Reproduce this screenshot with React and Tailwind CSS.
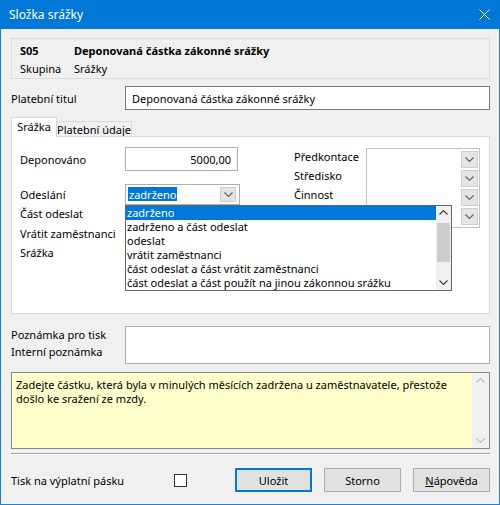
import React from "react";

const font = { fontFamily: '"Noto Sans", "Segoe UI", sans-serif' };

function Chevron({ up = false, color = "#606060" }) {
  return (
    <svg width="9" height="5" viewBox="0 0 9 5" className={up ? "rotate-180" : ""}>
      <path d="M0.5 0.5 L4.5 4.5 L8.5 0.5" fill="none" stroke={color} strokeWidth="1.1" />
    </svg>
  );
}

function ComboButton({ className = "" }) {
  return (
    <div className={`flex items-center justify-center bg-[#e5e5e5] border border-[#cfcfcf] ${className}`}>
      <Chevron />
    </div>
  );
}

const options = [
  "zadrženo",
  "zadrženo a část odeslat",
  "odeslat",
  "vrátit zaměstnanci",
  "část odeslat a část vrátit zaměstnanci",
  "část odeslat a část použít na jinou zákonnou srážku",
];

export default function App() {
  return (
    <div
      style={font}
      className="w-[500px] h-[505px] flex flex-col bg-[#f0f0f0] border border-t-0 border-[#1a82d6] text-[11px] text-black leading-none"
    >
      {/* Title bar */}
      <div className="h-[29px] -mx-px bg-[#0078d7] text-white flex items-center justify-between pl-[9px] pr-[10px]">
        <span className="text-[12px]">Složka srážky</span>
        <svg width="11" height="11" viewBox="0 0 11 11">
          <path d="M0.5 0.5 L10.5 10.5 M10.5 0.5 L0.5 10.5" stroke="white" strokeWidth="1" />
        </svg>
      </div>

      <div className="flex flex-col pl-[10px] pr-[9px]">
        {/* Header */}
        <div className="mt-[9px] h-[41px] border border-[#dcdcdc] px-[8px] pt-[2px] flex flex-col">
          <div className="h-[18px] flex items-center font-bold">
            <span className="w-[54px]">S05</span>
            <span>Deponovaná částka zákonné srážky</span>
          </div>
          <div className="h-[18px] flex items-center">
            <span className="w-[54px]">Skupina</span>
            <span>Srážky</span>
          </div>
        </div>

        {/* Platební titul */}
        <div className="mt-[7px] flex items-center">
          <span className="w-[114px]">Platební titul</span>
          <div className="flex-1 h-[24px] bg-white border border-[#7a7a7a] flex items-center px-[6px]">
            Deponovaná částka zákonné srážky
          </div>
        </div>

        {/* Tabs */}
        <div className="mt-[7px] flex items-end h-[19px]">
          <div className="h-[20px] w-[46px] bg-white border border-b-0 border-[#d9d9d9] flex items-center justify-center relative z-10 -mb-px pb-[2px]">
            Srážka
          </div>
          <div className="h-[15px] w-[75px] border border-l-0 border-b-0 border-[#d9d9d9] bg-[#f0f0f0] flex items-center justify-center">
            Platební údaje
          </div>
        </div>

        {/* Tab panel */}
        <div className="h-[178px] bg-white border border-[#d9d9d9] relative">
          <div className="flex pt-[10px] pl-[8px]">
            {/* Left column */}
            <div className="flex flex-col w-[274px]">
              <div className="flex items-center h-[24px]">
                <span className="w-[105px]">Deponováno</span>
                <div className="w-[113px] h-[24px] border border-[#adadad] flex items-center justify-end px-[6px]">
                  5000,00
                </div>
              </div>
              <div className="flex items-center h-[20px] mt-[13px]">
                <span className="w-[105px]">Odeslání</span>
                <div className="relative w-[115px] h-[21px] border border-[#adadad] flex items-center pl-[2px]">
                  <span className="bg-[#0078d7] text-white h-[14px] flex items-center px-px">zadrženo</span>
                  <ComboButton className="absolute right-[3px] top-[2px] w-[16px] h-[15px]" />
                  {/* Dropped list */}
                  <div className="absolute left-[-1px] top-[20px] w-[327px] bg-white border border-[#646464] z-20 flex">
                    <div className="flex-1 flex flex-col">
                      {options.map((o, i) => (
                        <div
                          key={o}
                          className={`h-[14px] flex items-center px-[1px] whitespace-nowrap ${
                            i === 0 ? "bg-[#0078d7] text-white" : ""
                          }`}
                        >
                          {o}
                        </div>
                      ))}
                    </div>
                    <div className="w-[15px] bg-[#f0f0f0] flex flex-col items-center">
                      <div className="h-[14px] flex items-center">
                        <Chevron up color="#404040" />
                      </div>
                      <div className="w-[13px] h-[39px] bg-[#cdcdcd] mt-[3px]" />
                      <div className="flex-1" />
                      <div className="h-[14px] flex items-center">
                        <Chevron color="#404040" />
                      </div>
                    </div>
                  </div>
                </div>
              </div>
              <div className="flex flex-col">
                <span className="h-[19px] flex items-center">Část odeslat</span>
                <span className="h-[20px] flex items-center">Vrátit zaměstnanci</span>
                <span className="h-[19px] flex items-center">Srážka</span>
              </div>
            </div>

            {/* Right column */}
            <div className="flex">
              <div className="flex flex-col w-[72px]">
                <span className="h-[19px] flex items-center">Předkontace</span>
                <span className="h-[19px] flex items-center">Středisko</span>
                <span className="h-[19px] flex items-center">Činnost</span>
              </div>
              <div className="w-[114px] h-[80px] border border-[#c3c3c3] flex justify-end pr-[1px] pt-[2px] mt-px">
                <div className="flex flex-col gap-[2px]">
                  <ComboButton className="w-[17px] h-[17px]" />
                  <ComboButton className="w-[17px] h-[17px]" />
                  <ComboButton className="w-[17px] h-[17px]" />
                  <ComboButton className="w-[17px] h-[17px]" />
                </div>
              </div>
            </div>
          </div>
        </div>

        {/* Poznámky */}
        <div className="mt-[12px] flex items-start">
          <div className="w-[114px] flex flex-col">
            <span className="h-[17px] flex items-center">Poznámka pro tisk</span>
            <span className="h-[17px] flex items-center">Interní poznámka</span>
          </div>
          <div className="flex-1 h-[38px] bg-white border border-[#adadad]" />
        </div>

        {/* Help note */}
        <div className="mt-[8px] h-[77px] border border-[#828790] bg-[#ffffcc] flex">
          <div className="flex-1 min-w-0 px-[4px] pt-[5px] leading-[14px]">
            Zadejte částku, která byla v minulých měsících zadržena u zaměstnavatele, přestože došlo ke sražení ze mzdy.
          </div>
          <div className="w-[17px] shrink-0 bg-[#f0f0f0] flex flex-col items-center justify-between py-[5px]">
            <Chevron up color="#c0c0c0" />
            <Chevron color="#c0c0c0" />
          </div>
        </div>

        {/* Separator */}
        <div className="mt-[4px] border-t border-[#a0a0a0] border-b border-b-white" />

        {/* Bottom row */}
        <div className="mt-[13px] flex items-center">
          <span className="w-[163px]">Tisk na výplatní pásku</span>
          <div className="w-[13px] h-[13px] border border-[#333333] bg-white" />
          <div className="ml-auto flex gap-[12px]">
            <button className="w-[77px] h-[24px] bg-[#e1e1e1] border-2 border-[#0078d7]">Uložit</button>
            <button className="w-[77px] h-[24px] bg-[#e1e1e1] border border-[#adadad]">Storno</button>
            <button className="w-[77px] h-[24px] bg-[#e1e1e1] border border-[#adadad]">
              <span className="underline">N</span>ápověda
            </button>
          </div>
        </div>
      </div>
    </div>
  );
}
